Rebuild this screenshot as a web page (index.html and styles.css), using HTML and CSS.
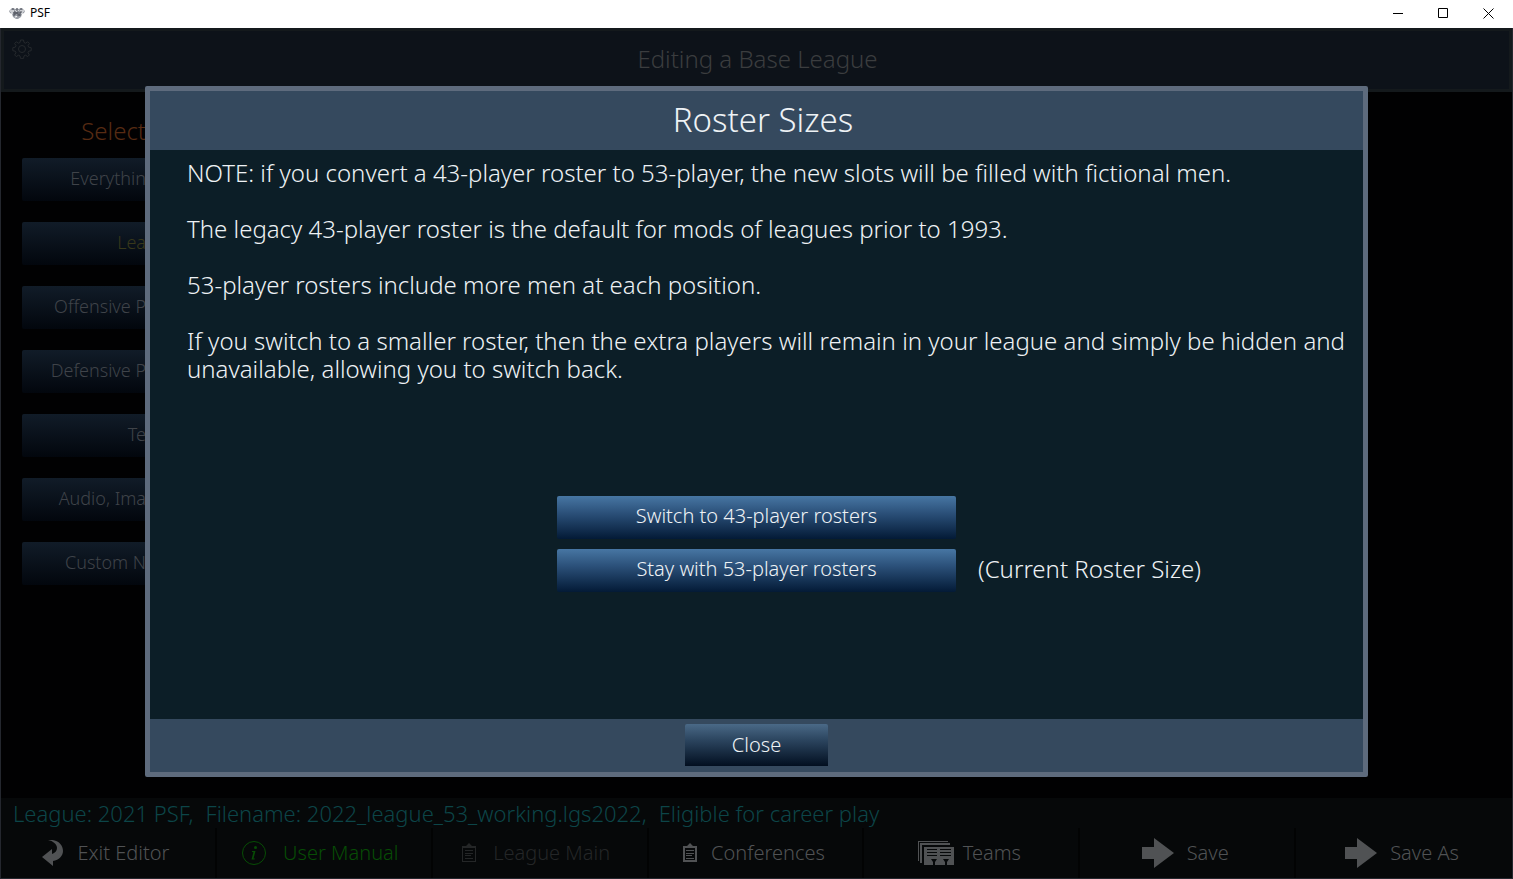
FILE: index.html
```html
<!DOCTYPE html>
<html lang="en">

<head>
    <meta charset="UTF-8">
    <meta name="viewport" content="width=device-width, initial-scale=1.0">
    <title>PSF</title>
    <link rel="stylesheet" href="styles.css">
</head>

<body>
    <div class="titlebar">
        <svg class="app-logo" viewBox="0 0 16 12">
            <path d="M0 4 3 1l4 1 1-1 1 1 4-1 3 3-1 2-2 1-1 3-3 2H7l-3-2-1-3-2-1z" fill="#9a9ea6" />
            <path d="M1 4h4M11 4h4M2 6h2M12 6h2M6 4h4M6 10l4-1" stroke="#fff" fill="none" />
            <path d="M4 1v2M8 1v3M12 1v2M5 5v4M5 5h2v2H5M10 5H8v2h2v2H8M11 9V5h2" stroke="#4a4f58" fill="none" />
        </svg>
        <span class="app-name">PSF</span>
        <div class="window-btns">
            <button aria-label="Minimize"><svg viewBox="0 0 11 11"><path d="M0 5.5h10" /></svg></button>
            <button aria-label="Maximize"><svg viewBox="0 0 11 11"><path d="M.5.5h9v9h-9z" /></svg></button>
            <button aria-label="Close window"><svg viewBox="0 0 11 11"><path d="M.5.5l10 10M10.5.5l-10 10" /></svg></button>
        </div>
    </div>

    <div class="game">
        <header class="top">
            <button class="settings" aria-label="Settings">
                <svg viewBox="0 0 20 20">
                    <path d="M8.5 1h3l.5 2.5 1.6.7 2.1-1.4 1.7 1.7-1.4 2.1.7 1.6 2.5.5v3l-2.5.5-.7 1.6 1.4 2.1-1.7 1.7-2.1-1.4-1.6.7-.5 2.5h-3l-.5-2.5-1.6-.7-2.1 1.4-1.7-1.7 1.4-2.1-.7-1.6-2.5-.5v-3l2.5-.5.7-1.6-1.4-2.1 1.7-1.7 2.1 1.4 1.6-.7z" />
                    <circle cx="10" cy="10" r="3.5" />
                </svg>
            </button>
            <h1>Editing a Base League</h1>
        </header>

        <nav class="side">
            <h2>Select</h2>
            <button>Everythin</button>
            <button class="active">Lea</button>
            <button>Offensive P</button>
            <button>Defensive P</button>
            <button>Te</button>
            <button>Audio, Ima</button>
            <button>Custom N</button>
        </nav>

        <footer class="bottom">
            <p class="status"><span>League: 2021 PSF,</span><span>Filename: 2022_league_53_working.lgs2022,</span><span>Eligible for career play</span></p>
            <div class="menu">
                <button>
                    <svg width="22" height="26" viewBox="0 0 22 26"><path d="M6 0C15-1 21 4 21 11c0 5-4 9-10 10v5L0 17l10-8v5c3-1 5-3 5-6 0-4-4-7-9-8z" /></svg>
                    <span>Exit Editor</span>
                </button>
                <button class="green">
                    <svg width="26" height="26" viewBox="0 0 26 26"><circle cx="13" cy="13" r="11.5" fill="none" stroke="currentColor" /><circle cx="14.5" cy="7.5" r="1.5" /><path d="M11 11h3.5l-2 7.5h1.500l-.5 1h-3l2-7.5h-1.500z" /></svg>
                    <span>User Manual</span>
                </button>
                <button disabled>
                    <svg width="16" height="20" viewBox="0 0 16 20"><path fill-rule="evenodd" d="M1 3h4l3-3 3 3h4v16H1zM2 5v13h12V5z" /><path d="M4 4h8v1H4zM4 7h8v1H4zM4 10h8v1H4zM4 12h6v1H4zM4 15h8v1H4z" /></svg>
                    <span>League Main</span>
                </button>
                <button>
                    <svg width="16" height="20" viewBox="0 0 16 20"><path fill-rule="evenodd" d="M1 3h4l3-3 3 3h4v16H1zM3 5v12h10V5z" /><path d="M4 4h8v1H4zM4 7h8v1H4zM4 10h8v1H4zM4 12h6v1H4zM4 15h8v1H4z" /></svg>
                    <span>Conferences</span>
                </button>
                <button class="tight">
                    <svg width="36" height="24" viewBox="0 0 36 24"><path d="M0 0h30v1H1v19H0zM2 2h30v2H4v18H2z" /><path fill-rule="evenodd" d="M6 6h30v18h-7v-3l2-3h-6l2 3v3H17v-3l2-3h-6l2 3v3H6zM9 8v1h10V8zM9 11v1h10v-1zM9 14v1h10v-1zM22 8v1h11V8zM22 11v1h11v-1zM22 14v1h11v-1z" /></svg>
                    <span>Teams</span>
                </button>
                <button>
                    <svg width="32" height="30" viewBox="0 0 32 30"><path d="M0 9h12V0l20 15-20 15v-9H0z" /></svg>
                    <span>Save</span>
                </button>
                <button>
                    <svg width="32" height="30" viewBox="0 0 32 30"><path d="M0 9h12V0l20 15-20 15v-9H0z" /></svg>
                    <span>Save As</span>
                </button>
            </div>
        </footer>

        <div class="overlay">
            <div class="dialog" role="dialog" aria-labelledby="dialog-title">
                <h2 id="dialog-title">Roster Sizes</h2>
                <div class="dialog-body">
                    <p>NOTE: if you convert a 43-player roster to 53-player, the new slots will be filled with fictional men.</p>
                    <p>The legacy 43-player roster is the default for mods of leagues prior to 1993.</p>
                    <p>53-player rosters include more men at each position.</p>
                    <p>If you switch to a smaller roster, then the extra players will remain in your league and simply be hidden and unavailable, allowing you to switch back.</p>
                    <div class="choices">
                        <button>Switch to 43-player rosters</button>
                        <button>Stay with 53-player rosters</button>
                        <span class="current">(Current Roster Size)</span>
                    </div>
                </div>
                <div class="dialog-footer">
                    <button>Close</button>
                </div>
            </div>
        </div>
    </div>
</body>

</html>
```
FILE: styles.css
```css
* {
    margin: 0;
    padding: 0;
    box-sizing: border-box;
}

body {
    display: flex;
    flex-direction: column;
    height: 100vh;
    overflow: hidden;
    background: #000;
    font-family: "Noto Sans", "Open Sans", sans-serif;
    font-weight: 300;
}

button {
    border: none;
    background: none;
    font: inherit;
    color: inherit;
    cursor: pointer;
}

/* window title bar */
.titlebar {
    display: flex;
    align-items: center;
    height: 28px;
    flex-shrink: 0;
    padding: 0 2px 3px 9px;
    background: #fff;
    color: #000;
}

.app-logo {
    width: 16px;
    height: 12px;
    margin-right: 5px;
}

.app-name {
    font-size: 12px;
    font-weight: 400;
    line-height: 16px;
}

.window-btns {
    display: flex;
    margin-left: auto;
}

.window-btns button {
    width: 45px;
    height: 24px;
}

.window-btns svg {
    width: 11px;
    height: 11px;
    fill: none;
    stroke: #000;
}

/* game screen */
.game {
    position: relative;
    display: flex;
    flex-direction: column;
    flex: 1;
    border: 1px solid #24272e;
    border-top: none;
    background: #010102;
}

.top {
    display: flex;
    height: 64px;
    padding: 8px;
    border: 3px solid #14191c;
    background: #0d1219;
}

.top h1 {
    flex: 1;
    margin-right: 18px;
    font-size: 24px;
    font-weight: 300;
    line-height: 40px;
    text-align: center;
    color: #3b3d3f;
}

.settings {
    width: 20px;
    height: 20px;
}

.settings svg {
    width: 20px;
    height: 20px;
    fill: none;
    stroke: #25292d;
}

.side {
    display: flex;
    flex-direction: column;
    gap: 21px;
    flex: 1;
    width: 124px;
    margin: 21px 0 0 21px;
    text-align: right;
    color: #3f4349;
}

.side h2 {
    height: 24px;
    font-size: 24px;
    font-weight: 300;
    line-height: 36px;
    color: #572b13;
}

.side button {
    height: 43px;
    padding-bottom: 4px;
    font-size: 18px;
    text-align: right;
    border-radius: 2px 0 0 2px;
    background: linear-gradient(#111c28, #02060d);
}

.side .active {
    color: #38381a;
}

.bottom {
    background: #060809;
}

.status {
    display: flex;
    gap: 12px;
    padding: 0 12px;
    font-size: 22px;
    line-height: 30px;
    color: #0c4548;
}

.menu {
    display: grid;
    grid-template-columns: repeat(7, 1fr);
    height: 50px;
    color: #505254;
}

.menu button {
    display: flex;
    align-items: center;
    justify-content: center;
    gap: 13px;
    padding-right: 4px;
    font-size: 20px;
    border-right: 2px solid #020303;
}

.menu button:last-child {
    border-right: none;
}

.menu span {
    padding-bottom: 2px;
}

.menu .tight {
    gap: 9px;
}

.menu .green {
    gap: 16px;
    padding-right: 8px;
    color: #074d05;
}

.menu button:disabled {
    gap: 16px;
    padding-right: 8px;
    color: #242627;
}

.menu svg {
    fill: currentColor;
}

/* roster dialog */
.overlay {
    position: absolute;
    inset: 0;
    display: flex;
    padding: 58px 144px 101px;
}

.dialog {
    flex: 1;
    display: flex;
    flex-direction: column;
    border: 5px solid #5e6b7d;
    border-radius: 2px;
    background: #0c1e27;
    color: #eef2f5;
}

.dialog h2 {
    height: 59px;
    padding-left: 13px;
    font-size: 33px;
    font-weight: 300;
    line-height: 58px;
    text-align: center;
    background: #35495e;
}

.dialog-body {
    flex: 1;
    padding: 9px 10px 0 37px;
    font-size: 24px;
    line-height: 28px;
}

.dialog-body p {
    margin-bottom: 28px;
}

.choices {
    display: grid;
    grid-template-columns: 1fr 399px 1fr;
    gap: 10px 22px;
    align-items: center;
    margin: 113px 27px 0 0;
}

.choices button {
    grid-column: 2;
    height: 43px;
    padding-bottom: 3px;
    font-size: 20px;
    border-radius: 2px;
    background: linear-gradient(#4776a3, #2b5079 40%, #031a36);
}

.choices .current {
    grid-column: 3;
    padding-bottom: 4px;
}

.dialog-footer {
    height: 53px;
    padding-top: 5px;
    text-align: center;
    background: #35495e;
}

.dialog-footer button {
    width: 143px;
    height: 42px;
    padding-bottom: 2px;
    font-size: 20px;
    border-radius: 2px 2px 0 0;
    background: linear-gradient(#4a6987, #2a435d 40%, #020f20);
}
```
